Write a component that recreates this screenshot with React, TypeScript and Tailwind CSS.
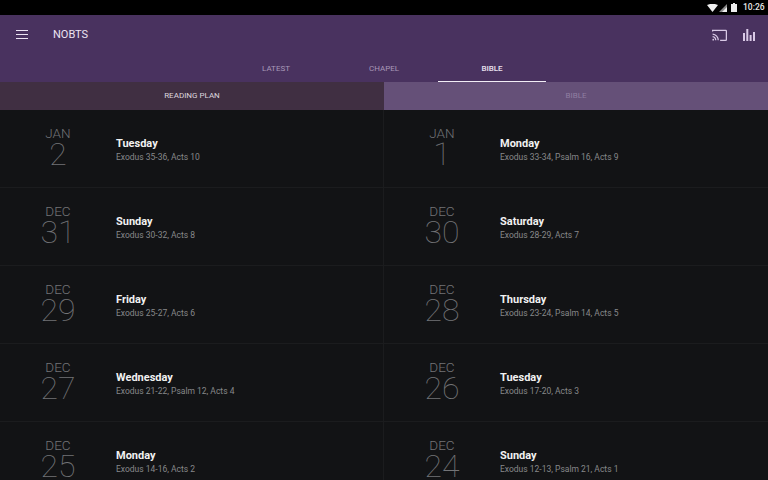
import React from "react";

type Entry = { m: string; d: string; day: string; text: string };

const rows: [Entry, Entry][] = [
  [
    { m: "JAN", d: "2", day: "Tuesday", text: "Exodus 35-36, Acts 10" },
    { m: "JAN", d: "1", day: "Monday", text: "Exodus 33-34, Psalm 16, Acts 9" },
  ],
  [
    { m: "DEC", d: "31", day: "Sunday", text: "Exodus 30-32, Acts 8" },
    { m: "DEC", d: "30", day: "Saturday", text: "Exodus 28-29, Acts 7" },
  ],
  [
    { m: "DEC", d: "29", day: "Friday", text: "Exodus 25-27, Acts 6" },
    { m: "DEC", d: "28", day: "Thursday", text: "Exodus 23-24, Psalm 14, Acts 5" },
  ],
  [
    { m: "DEC", d: "27", day: "Wednesday", text: "Exodus 21-22, Psalm 12, Acts 4" },
    { m: "DEC", d: "26", day: "Tuesday", text: "Exodus 17-20, Acts 3" },
  ],
  [
    { m: "DEC", d: "25", day: "Monday", text: "Exodus 14-16, Acts 2" },
    { m: "DEC", d: "24", day: "Sunday", text: "Exodus 12-13, Psalm 21, Acts 1" },
  ],
];

function Cell({ e, right }: { e: Entry; right?: boolean }) {
  return (
    <div className={`flex h-[78px] w-[384px] shrink-0 items-center border-b border-[#1b1c1e] ${right ? "" : "border-r"}`}>
      <div className="flex w-[116px] shrink-0 flex-col items-center pb-[1px] text-[#737477]">
        <span className="text-[13.5px] leading-[13px] font-light">{e.m}</span>
        <span className="text-[32px] leading-[29px] font-thin">{e.d}</span>
      </div>
      <div className="flex flex-col pt-[2px]">
        <span className="text-[11px] leading-[13px] font-bold text-[#f1f1f1]">{e.day}</span>
        <span className="mt-[2px] text-[8.5px] leading-[11px] text-[#87888a]">{e.text}</span>
      </div>
    </div>
  );
}

export default function App() {
  return (
    <div className="flex h-[480px] w-[768px] flex-col overflow-hidden bg-[#121315] font-['Roboto',sans-serif]">
      <div className="flex h-[15px] shrink-0 items-center justify-end bg-black pr-[5px] text-[8.5px] text-[#e8e8e8]">
        <svg width="11" height="8" viewBox="0 0 11 8" className="mr-[1px]">
          <path d="M0 1 Q5.5 -1.5 11 1 L5.5 8 Z" fill="#eee" />
        </svg>
        <svg width="8" height="8" viewBox="0 0 8 8" className="mr-[4px]">
          <path d="M0 8 L8 0 V8 Z" fill="#8a8a8a" />
          <path d="M3 8 L8 3 V8 Z" fill="#eee" />
        </svg>
        <svg width="6" height="9" viewBox="0 0 6 9" className="mr-[6px]">
          <path d="M2 0 H4 V1 H6 V9 H0 V1 H2 Z" fill="#eee" />
        </svg>
        <span className="w-[20px] font-medium">10:26</span>
      </div>

      <div className="flex h-[67px] shrink-0 flex-col bg-[#49325f]">
        <div className="flex h-[39px] shrink-0 items-center pl-[16px] pr-[13px]">
          <svg width="12" height="9" viewBox="0 0 12 9" className="shrink-0">
            <path d="M0 0.5 H12 M0 4.5 H12 M0 8.5 H12" stroke="#ece4f2" strokeWidth="1.2" />
          </svg>
          <span className="ml-[25px] pt-[1px] text-[11px] text-[#ece4f2]">NOBTS</span>
          <div className="ml-auto flex items-center gap-[16px]">
            <svg width="15" height="12" viewBox="0 0 24 19" fill="none" stroke="#d9c9e6" strokeWidth="2">
              <path d="M1 4 V2 H22 A1 1 0 0 1 23 3 V17 A1 1 0 0 1 22 18 H13" />
              <path d="M1 8 A10 10 0 0 1 10 18 M1 12 A6 6 0 0 1 6 18" />
              <circle cx="2" cy="17" r="1.4" fill="#d9c9e6" stroke="none" />
            </svg>
            <svg width="12" height="12" viewBox="0 0 12 12" fill="#d9c9e6">
              <rect x="0" y="4" width="2" height="8" />
              <rect x="3.3" y="0" width="2" height="12" />
              <rect x="6.6" y="6" width="2" height="6" />
              <rect x="10" y="3" width="2" height="9" />
            </svg>
          </div>
        </div>
        <div className="flex h-[28px] items-start pl-[222px] text-[8px] font-normal">
          <div className="flex w-[108px] justify-center pt-[9px] text-[#a898b8]">LATEST</div>
          <div className="flex w-[108px] justify-center pt-[9px] text-[#a898b8]">CHAPEL</div>
          <div className="flex h-[28px] w-[108px] justify-center border-b border-[#f2eef6] pt-[9px] font-medium text-[#e9e2ef]">BIBLE</div>
        </div>
      </div>

      <div className="flex h-[28px] shrink-0 text-[8px] font-normal">
        <div className="flex w-[384px] items-center justify-center bg-[#402f42] text-[#ddd6df]">READING PLAN</div>
        <div className="flex w-[384px] items-center justify-center bg-[#655078] text-[#8f7ea1]">BIBLE</div>
      </div>

      <div className="flex flex-col">
        {rows.map((r, i) => (
          <div key={i} className="flex shrink-0">
            <Cell e={r[0]} />
            <Cell e={r[1]} right />
          </div>
        ))}
      </div>
    </div>
  );
}
